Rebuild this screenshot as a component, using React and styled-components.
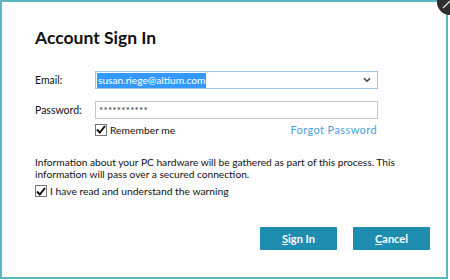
import React from "react";
import styled, { createGlobalStyle } from "styled-components";

const Global = createGlobalStyle`
  html, body { margin: 0; padding: 0; background: #ffffff; }
  body { font-family: Lato, "Noto Sans", sans-serif; }
`;

const Frame = styled.div`
  position: relative;
  width: 450px;
  height: 280px;
  overflow: hidden;
  background: #ffffff;
`;

const Window = styled.div`
  box-sizing: border-box;
  width: 448px;
  height: 279px;
  border: 2px solid #5ab8c0;
  background: #fff;
  padding: 24px 0 0 33px;
  display: flex;
  flex-direction: column;
`;

const Title = styled.h1`
  margin: 0;
  font-size: 17.5px;
  font-weight: 700;
  color: #111;
  line-height: 24px;
`;

const Form = styled.div`
  margin-top: 21px;
  display: grid;
  grid-template-columns: 60px 283px;
  row-gap: 12px;
  align-items: center;
`;

const Label = styled.label`
  font-size: 10.5px;
  color: #111;
`;

const Field = styled.div`
  box-sizing: border-box;
  height: 18px;
  border: 1px solid ${(p) => (p.$focus ? "#9ec6e6" : "#c9c9c9")};
  display: flex;
  align-items: center;
  padding: 0 6px 0 1px;
  font-size: 10.2px;
  color: #111;
`;

const Selected = styled.span`
  background: #3399ff;
  color: #fff;
  line-height: 15px;
  padding: 0 1px;
`;

const Stars = styled.span`
  font-size: 10px;
  letter-spacing: 0.2px;
  padding-left: 2px;
  color: #333;
`;

const Spacer = styled.div`
  flex: 1;
`;

const OptionsRow = styled.div`
  grid-column: 2;
  margin-top: -8px;
  display: flex;
  align-items: center;
  justify-content: space-between;
`;

const Check = styled.span`
  box-sizing: border-box;
  width: 12px;
  height: 12px;
  border: 1px solid #777;
  background: #fff;
  display: inline-flex;
  align-items: center;
  justify-content: center;
  flex-shrink: 0;
`;

const CheckLabel = styled.div`
  display: flex;
  align-items: center;
  gap: 3px;
  font-size: 10.3px;
  color: #111;
`;

const Link = styled.a`
  font-size: 11px;
  color: #4aa0e0;
  letter-spacing: 0.4px;
  text-decoration: none;
  margin-right: 1px;
`;

const Info = styled.p`
  margin: 20px 0 0 0;
  width: 390px;
  font-size: 10.2px;
  line-height: 12px;
  color: #111;
`;

const Warning = styled(CheckLabel)`
  margin-top: 5px;
`;

const Buttons = styled.div`
  margin-top: 30px;
  margin-right: 16px;
  display: flex;
  justify-content: flex-end;
  gap: 16px;
`;

const Button = styled.button`
  width: 77px;
  height: 23px;
  border: none;
  border-radius: 1px;
  background: #1e8db0;
  color: #fff;
  font-family: inherit;
  font-size: 11px;
  font-weight: 700;
  cursor: pointer;
  u { text-decoration-thickness: 1px; }
`;

const Corner = styled.div`
  position: absolute;
  top: -11px;
  right: -13px;
  width: 26px;
  height: 26px;
  border-radius: 50%;
  background: #2e2e2e;
`;

const Tick = () => (
  <svg width="10" height="9" viewBox="0 0 10 9">
    <path d="M1 4.5 L3.8 7.5 L9 1" fill="none" stroke="#111" strokeWidth="2" />
  </svg>
);

const Chevron = () => (
  <svg width="8" height="6" viewBox="0 0 8 6">
    <path d="M1 1.2 L4 4.2 L7 1.2" fill="none" stroke="#444" strokeWidth="1.6" />
  </svg>
);

export default function App() {
  return (
    <Frame>
      <Global />
      <Window>
        <Title>Account Sign In</Title>
        <Form>
          <Label>Email:</Label>
          <Field $focus>
            <Selected>susan.riege@altium.com</Selected>
            <Spacer />
            <Chevron />
          </Field>
          <Label>Password:</Label>
          <Field>
            <Stars>***********</Stars>
          </Field>
          <OptionsRow>
            <CheckLabel>
              <Check><Tick /></Check>
              Remember me
            </CheckLabel>
            <Link href="#">Forgot Password</Link>
          </OptionsRow>
        </Form>
        <Info>
          Information about your PC hardware will be gathered as part of this process. This
          <br />
          information will pass over a secured connection.
        </Info>
        <Warning>
          <Check><Tick /></Check>
          I have read and understand the warning
        </Warning>
        <Buttons>
          <Button><u>S</u>ign In</Button>
          <Button><u>C</u>ancel</Button>
        </Buttons>
      </Window>
      <Corner>
        <svg width="26" height="26" viewBox="0 0 26 26">
          <path d="M6 19 L13 12" stroke="#ddd" strokeWidth="1.3" />
        </svg>
      </Corner>
    </Frame>
  );
}
